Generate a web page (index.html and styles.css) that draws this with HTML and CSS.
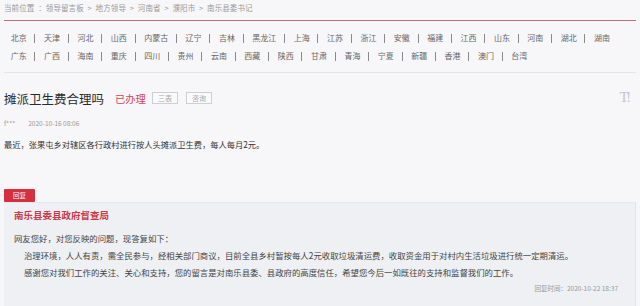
FILE: index.html
```html
<!DOCTYPE html>
<html lang="zh">
<head>
<meta charset="utf-8">
<link rel="stylesheet" href="styles.css">
</head>
<body>
<div class="page">
  <div class="crumb">当前位置 ：领导留言板 &gt; 地方领导 &gt; 河南省 &gt; 濮阳市 &gt; 南乐县委书记</div>
  <div class="areas">
    <ul class="row">
      <li>北京</li><li>天津</li><li>河北</li><li>山西</li><li>内蒙古</li><li>辽宁</li><li>吉林</li><li>黑龙江</li><li>上海</li><li>江苏</li><li>浙江</li><li>安徽</li><li>福建</li><li>江西</li><li>山东</li><li>河南</li><li>湖北</li><li class="last">湖南</li>
    </ul>
    <ul class="row">
      <li>广东</li><li>广西</li><li>海南</li><li>重庆</li><li>四川</li><li>贵州</li><li>云南</li><li>西藏</li><li>陕西</li><li>甘肃</li><li>青海</li><li>宁夏</li><li>新疆</li><li>香港</li><li>澳门</li><li class="last">台湾</li>
    </ul>
  </div>
  <div class="head">
    <h1 class="title">摊派卫生费合理吗</h1>
    <span class="status">已办理</span>
    <span class="tag">三表</span>
    <span class="tag">咨询</span>
    <span class="fontbtn">T!</span>
  </div>
  <div class="meta"><span class="user">f***</span><span class="date">2020-10-16 08:06</span></div>
  <p class="content">最近，张果屯乡对辖区各行政村进行按人头摊派卫生费，每人每月2元。</p>
  <div class="badge">回复</div>
  <div class="reply">
    <div class="org">南乐县委县政府督查局</div>
    <p class="rline">网友您好，对您反映的问题，现答复如下：</p>
    <p class="rline indent">治理环境，人人有责，需全民参与，经相关部门商议，目前全县乡村暂按每人2元收取垃圾清运费，收取资金用于对村内生活垃圾进行统一定期清运。</p>
    <p class="rline indent">感谢您对我们工作的关注、关心和支持，您的留言是对南乐县委、县政府的高度信任，希望您今后一如既往的支持和监督我们的工作。</p>
    <div class="rtime">回复时间：2020-10-22 18:37</div>
  </div>
</div>
</body>
</html>
```
FILE: styles.css
```css
* { box-sizing: border-box; }
html, body { margin: 0; padding: 0; }
body {
  background: #f7f6f9;
  font-family: "Noto Sans CJK SC", "Liberation Sans", sans-serif;
  color: #333;
  width: 640px;
  height: 306px;
  overflow: hidden;
}
.page { padding: 0 4px; }
.crumb {
  font-size: 7.5px;
  line-height: 16px;
  height: 21px;
  color: #9a9a9a;
  word-spacing: 2px;
  letter-spacing: 0.1px;
  border-bottom: 1px solid #b9707a;
}
.areas {
  padding: 8px 0 7px;
  border-bottom: 1px solid #e5e4e8;
}
.row {
  list-style: none;
  margin: 0 0 0 -2px;
  padding: 0;
  display: flex;
  height: 18px;
  align-items: center;
}
.row li {
  flex-shrink: 0;
  white-space: nowrap;
  font-size: 8px;
  line-height: 18px;
  color: #666;
  padding: 0 8.7px;
  position: relative;
}
.row li::after {
  content: "";
  position: absolute;
  right: 0;
  top: 5px;
  width: 1px;
  height: 9px;
  background: #8a8a8a;
}
.row li.last::after { display: none; }
.head {
  display: flex;
  align-items: center;
  height: 24px;
  margin-top: 13px;
}
.title {
  margin: 0;
  font-size: 12.5px;
  font-weight: normal;
  color: #2b2b2b;
}
.status {
  font-size: 10.3px;
  color: #cf4557;
  margin-left: 11px;
}
.tag {
  font-size: 7px;
  color: #aaa;
  border: 1px solid #cfcfcf;
  background: #fafafa;
  width: 26px;
  height: 12px;
  line-height: 10px;
  text-align: center;
  margin-left: 6px;
}
.tag + .tag { margin-left: 8px; }
.fontbtn {
  margin-left: auto;
  margin-right: 7px;
  font-family: "Liberation Serif", serif;
  font-size: 14px;
  color: #c4c4c4;
  letter-spacing: -2px;
}
.meta {
  margin-top: 8px;
  font-size: 6.5px;
  line-height: 10px;
  color: #9a9a9a;
}
.date { margin-left: 13px; }
.content {
  margin: 10px 0 0;
  font-size: 8.25px;
  line-height: 12px;
  color: #333;
}
.badge {
  margin-top: 39px;
  width: 31px;
  height: 13px;
  line-height: 13px;
  background: #d4303f;
  color: #fff;
  font-size: 6.5px;
  text-align: center;
  border-radius: 1px;
}
.reply {
  background: #eef0f3;
  border-top: 1px solid #e7e7eb;
  border-right: 1px solid #e2e3e8;
  padding: 5px 17px 0 10px;
  height: 110px;
}
.org {
  font-size: 9.5px;
  line-height: 14px;
  font-weight: bold;
  color: #c63a4c;
}
.rline {
  margin: 0;
  font-size: 8.4px;
  line-height: 17px;
  color: #444;
  white-space: nowrap;
}
.org + .rline { margin-top: 8px; }
.indent { padding-left: 10px; }
.rtime {
  text-align: right;
  font-size: 6.5px;
  line-height: 14px;
  color: #999;
}
```
